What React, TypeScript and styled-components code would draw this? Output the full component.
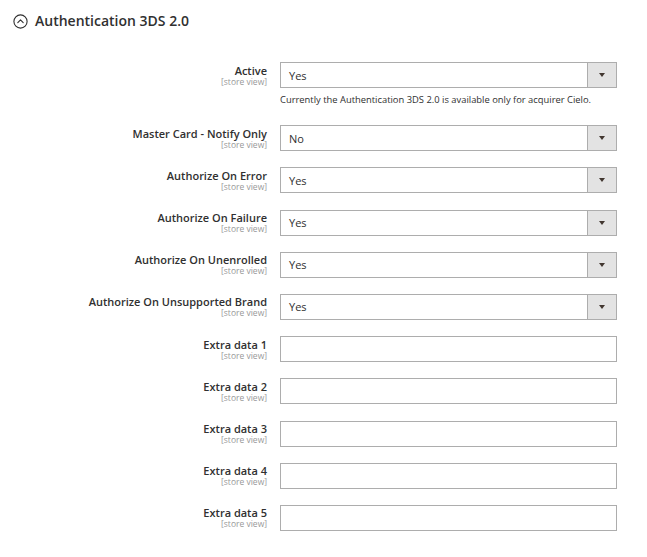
import React from "react";
import styled, { createGlobalStyle } from "styled-components";

const Global = createGlobalStyle`
  html, body { margin: 0; padding: 0; background: #ffffff; }
  body { font-family: "Open Sans", "Liberation Sans", sans-serif; color: #303030; }
`;

const Page = styled.div`
  width: 647px;
  height: 557px;
  overflow: hidden;
  background: #fff;
`;

const Header = styled.div`
  display: flex;
  align-items: center;
  gap: 7px;
  padding: 11px 0 0 13px;
  height: 20px;
`;

const Title = styled.h2`
  margin: 0;
  font-size: 14px;
  font-weight: 600;
  line-height: 20px;
  color: #303030;
`;

const Form = styled.div`
  display: grid;
  grid-template-columns: 267px 337px;
  column-gap: 13px;
  row-gap: 16.2px;
  margin-top: 31px;
`;

const Label = styled.div`
  display: flex;
  flex-direction: column;
  align-items: flex-end;
  padding-top: 1.5px;
`;

const LabelText = styled.span`
  font-size: 11px;
  font-weight: 600;
  line-height: 13px;
  color: #303030;
`;

const Scope = styled.span`
  font-size: 8.5px;
  line-height: 10px;
  color: #999999;
`;

const Control = styled.div`
  display: flex;
  flex-direction: column;
`;

const SelectBox = styled.div`
  display: flex;
  height: 26px;
  box-sizing: border-box;
  border: 1px solid #adadad;
  background: #fff;
`;

const SelectValue = styled.div`
  flex: 1;
  display: flex;
  align-items: center;
  padding-left: 8px;
  font-size: 11px;
  color: #303030;
`;

const ArrowCell = styled.div`
  width: 28px;
  display: flex;
  align-items: center;
  justify-content: center;
  background: #e3e3e3;
  border-left: 1px solid #adadad;
`;

const Arrow = styled.span`
  width: 0;
  height: 0;
  border-left: 3px solid transparent;
  border-right: 3px solid transparent;
  border-top: 4px solid #41362f;
`;

const TextInput = styled.div`
  height: 26px;
  box-sizing: border-box;
  border: 1px solid #adadad;
  background: #fff;
`;

const Note = styled.div`
  font-size: 9.4px;
  line-height: 14px;
  padding-top: 5px;
  padding-bottom: 2px;
  color: #303030;
`;

type Row = { label: string; value?: string; note?: string };

const rows: Row[] = [
  { label: "Active", value: "Yes", note: "Currently the Authentication 3DS 2.0 is available only for acquirer Cielo." },
  { label: "Master Card - Notify Only", value: "No" },
  { label: "Authorize On Error", value: "Yes" },
  { label: "Authorize On Failure", value: "Yes" },
  { label: "Authorize On Unenrolled", value: "Yes" },
  { label: "Authorize On Unsupported Brand", value: "Yes" },
  { label: "Extra data 1" },
  { label: "Extra data 2" },
  { label: "Extra data 3" },
  { label: "Extra data 4" },
  { label: "Extra data 5" },
];

const CollapseIcon = () => (
  <svg width="15" height="15" viewBox="0 0 15 15" fill="none">
    <circle cx="7.5" cy="7.5" r="6.6" stroke="#303030" strokeWidth="1.1" />
    <path d="M4.8 8.6 L7.5 5.9 L10.2 8.6" stroke="#303030" strokeWidth="1.1" strokeLinecap="round" strokeLinejoin="round" />
  </svg>
);

export default function App() {
  return (
    <Page>
      <Global />
      <Header>
        <CollapseIcon />
        <Title>Authentication 3DS 2.0</Title>
      </Header>
      <Form>
        {rows.map((r) => (
          <React.Fragment key={r.label}>
            <Label>
              <LabelText>{r.label}</LabelText>
              <Scope>[store view]</Scope>
            </Label>
            <Control>
              {r.value !== undefined ? (
                <SelectBox>
                  <SelectValue>{r.value}</SelectValue>
                  <ArrowCell>
                    <Arrow />
                  </ArrowCell>
                </SelectBox>
              ) : (
                <TextInput />
              )}
              {r.note && <Note>{r.note}</Note>}
            </Control>
          </React.Fragment>
        ))}
      </Form>
    </Page>
  );
}
